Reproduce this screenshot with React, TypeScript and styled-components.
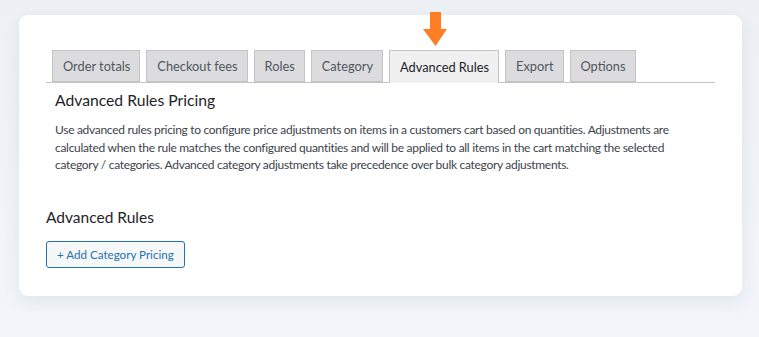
import styled, { createGlobalStyle } from 'styled-components';

const GlobalStyle = createGlobalStyle`
  html, body {
    margin: 0;
    padding: 0;
    background: #f1f5f9;
    font-family: Lato, "Noto Sans", sans-serif;
  }
`;

const tabs = [
  'Order totals',
  'Checkout fees',
  'Roles',
  'Category',
  'Advanced Rules',
  'Export',
  'Options',
];

export default function App() {
  return (
    <Page>
      <GlobalStyle />
      <Card>
        <TabBar>
          {tabs.map((label) => (
            <Tab key={label} active={label === 'Advanced Rules'}>
              {label === 'Advanced Rules' && (
                <Arrow width="24" height="34" viewBox="0 0 24 34">
                  <path d="M7 0 H18 V17 H24 L12.5 34 L0 17 H7 Z" fill="#fd7e24" />
                </Arrow>
              )}
              {label}
            </Tab>
          ))}
        </TabBar>
        <Section>
          <SectionTitle>Advanced Rules Pricing</SectionTitle>
          <Description>
            Use advanced rules pricing to configure price adjustments on items in a customers cart based on
            quantities. Adjustments are calculated when the rule matches the configured quantities and will be
            applied to all items in the cart matching the selected category / categories. Advanced category
            adjustments take precedence over bulk category adjustments.
          </Description>
        </Section>
        <RulesTitle>Advanced Rules</RulesTitle>
        <AddButton>+ Add Category Pricing</AddButton>
      </Card>
    </Page>
  );
}

const Page = styled.div`
  width: 759px;
  height: 337px;
  padding: 15px 0 0 19px;
  box-sizing: border-box;
  background: linear-gradient(180deg, #edf1f5 0%, #f2f6fa 100%);
`;

const Card = styled.div`
  width: 723px;
  height: 281px;
  box-sizing: border-box;
  padding: 35px 27px 0 27px;
  background: #ffffff;
  border-radius: 9px;
  box-shadow: 0 6px 18px rgba(30, 50, 80, 0.08);
`;

const TabBar = styled.div`
  display: flex;
  align-items: flex-end;
  gap: 6px;
  padding-left: 6px;
  border-bottom: 1px solid #c3c4c7;
  height: 32px;
`;

const Tab = styled.div<{ active?: boolean }>`
  position: relative;
  box-sizing: border-box;
  height: ${(p) => (p.active ? '33px' : '32px')};
  margin-bottom: ${(p) => (p.active ? '-1px' : '0')};
  padding: 0 9px 0 10px;
  display: flex;
  align-items: center;
  border: 1px solid #c3c4c7;
  border-bottom: ${(p) => (p.active ? 'none' : '1px solid #c3c4c7')};
  background: ${(p) => (p.active ? '#f0f0f1' : '#dcdcde')};
  color: ${(p) => (p.active ? '#1d2327' : '#50575e')};
  font-size: 12.8px;
  font-weight: 400;
  white-space: nowrap;
`;

const Arrow = styled.svg`
  position: absolute;
  left: 33px;
  top: -39px;
`;

const Section = styled.div`
  padding: 7px 9px 0 9px;
`;

const SectionTitle = styled.h2`
  margin: 0;
  font-size: 15.7px;
  font-weight: 400;
  color: #1d2327;
  line-height: 20px;
`;

const Description = styled.p`
  margin: 11px 0 0 0;
  font-size: 12px;
  letter-spacing: -0.3px;
  line-height: 17.5px;
  color: #3c434a;
`;

const RulesTitle = styled.h3`
  margin: 33px 0 0 0;
  font-size: 15.5px;
  font-weight: 400;
  color: #1d2327;
  line-height: 20px;
`;

const AddButton = styled.button`
  margin-top: 14px;
  height: 27px;
  padding: 0 10px;
  border: 1px solid #2271b1;
  border-radius: 3px;
  background: #f6f7f7;
  color: #2271b1;
  font-family: inherit;
  font-size: 11.6px;
`;
